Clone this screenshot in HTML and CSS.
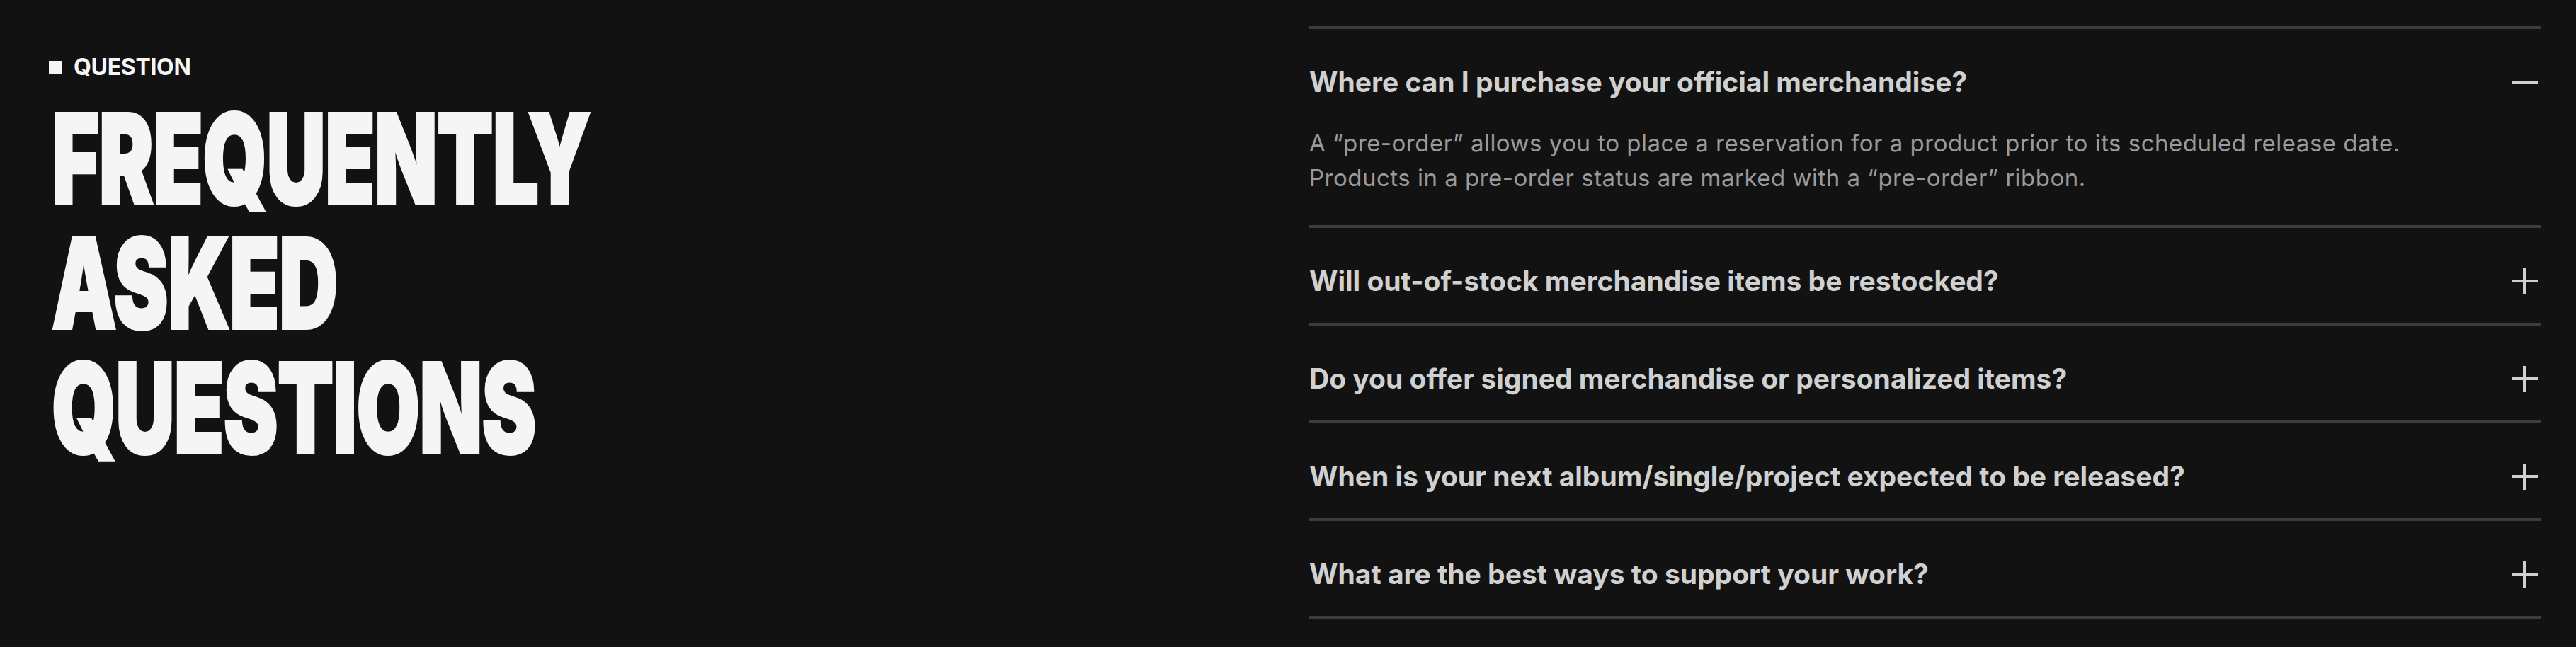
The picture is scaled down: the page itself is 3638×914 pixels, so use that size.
FILE: index.html
```html
<!DOCTYPE html>
<html lang="en">
<head>
    <meta charset="UTF-8">
    <meta name="viewport" content="width=device-width, initial-scale=1.0">
    <title>FAQ</title>
    <link rel="stylesheet" href="styles.css">
</head>
<body>
    <!-- FAQ section: title on the left, accordion on the right -->
    <section class="faq">
        <div class="faq-intro">
            <p class="eyebrow"><span class="eyebrow-mark"></span>QUESTION</p>
            <h1 class="faq-title">FREQUENTLY<br>ASKED<br>QUESTIONS</h1>
        </div>

        <div class="faq-list">
            <details class="faq-item" open>
                <summary>Where can I purchase your official merchandise?<span class="toggle"></span></summary>
                <p class="answer">A “pre-order” allows you to place a reservation for a product prior to its scheduled release date.<br>Products in a pre-order status are marked with a “pre-order” ribbon.</p>
            </details>
            <details class="faq-item">
                <summary>Will out-of-stock merchandise items be restocked?<span class="toggle"></span></summary>
                <p class="answer">Popular items are usually restocked. Follow our newsletter to hear about it first.</p>
            </details>
            <details class="faq-item">
                <summary>Do you offer signed merchandise or personalized items?<span class="toggle"></span></summary>
                <p class="answer">Signed items are released in limited drops. Personalized items are not available right now.</p>
            </details>
            <details class="faq-item">
                <summary>When is your next album/single/project expected to be released?<span class="toggle"></span></summary>
                <p class="answer">Release dates are announced on our social channels and in the newsletter.</p>
            </details>
            <details class="faq-item">
                <summary>What are the best ways to support your work?<span class="toggle"></span></summary>
                <p class="answer">Streaming, buying merch and coming to shows all help a lot.</p>
            </details>
        </div>
    </section>
</body>
</html>
```

FILE: styles.css
```css
/* Dark FAQ section */
body {
    margin: 0;
    background-color: #121212;
    color: #f5f5f5;
    font-family: Inter, "Noto Sans", sans-serif;
}
.faq {
    display: grid;
    grid-template-columns: 1fr 1740px;
    padding: 37px 49px 0 69px;
    min-height: 877px;
}

/* left side */
.eyebrow {
    display: flex;
    align-items: center;
    gap: 16px;
    margin: 40px 0 0;
    font-size: 32px;
    line-height: 36px;
    font-weight: 700;
    letter-spacing: -0.01em;
}
.eyebrow-mark {
    width: 19px;
    height: 19px;
    background-color: #f5f5f5;
}
.faq-title {
    margin: 23px 0 0 4px;
    font-size: 176px;
    line-height: 176px;
    font-weight: 900;
    letter-spacing: -0.005em;
    -webkit-text-stroke: 4px #f5f5f5;
    transform: scaleX(0.655);
    transform-origin: 0 0;
    white-space: nowrap;
}

/* accordion */
.faq-list {
    border-bottom: 4px solid #3c3c3c;
    align-self: start;
}
.faq-item {
    border-top: 4px solid #3c3c3c;
}
.faq-item summary {
    display: flex;
    justify-content: space-between;
    align-items: center;
    padding: 50px 0 34px;
    font-size: 39px;
    line-height: 50px;
    font-weight: 700;
    letter-spacing: 0;
    color: #d0d0d0;
    list-style: none;
    cursor: pointer;
}
.faq-item summary::-webkit-details-marker {
    display: none;
}
.toggle {
    position: relative;
    width: 37px;
    height: 37px;
    margin-right: 5px;
    flex-shrink: 0;
}
.toggle::before,
.toggle::after {
    content: "";
    position: absolute;
    background-color: #d0d0d0;
}
.toggle::before {
    left: 0;
    right: 0;
    top: 16px;
    height: 4px;
}
.toggle::after {
    top: 0;
    bottom: 0;
    left: 16px;
    width: 4px;
}
.faq-item[open] .toggle::after {
    display: none;
}
.answer {
    margin: 0;
    padding: 3px 0 42px;
    font-size: 33px;
    line-height: 49px;
    color: #9a9a9a;
    letter-spacing: 0.015em;
}
```
